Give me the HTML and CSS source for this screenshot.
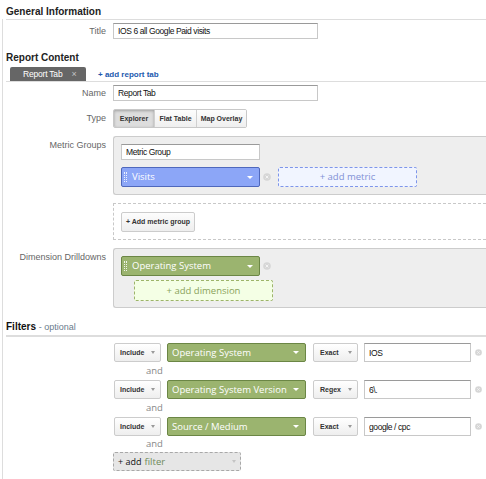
FILE: index.html
```html
<!DOCTYPE html>
<html>
<head>
<meta charset="utf-8">
<link rel="stylesheet" href="styles.css">
</head>
<body>
<div class="page">
  <div class="sec-head">General Information</div>
  <div class="frame">
    <div class="general">
      <div class="row row-top">
        <label class="lbl">Title</label>
        <input class="field w205" value="IOS 6 all Google Paid visits">
      </div>
    </div>

    <div class="sec-head2">Report Content</div>
    <div class="tabbar">
      <div class="tab"><span>Report Tab</span><span class="tab-x">×</span></div>
      <a class="add-tab">+ add report tab</a>
    </div>

    <div class="row row-top">
      <label class="lbl">Name</label>
      <input class="field w205" value="Report Tab">
    </div>

    <div class="row row-type">
      <label class="lbl">Type</label>
      <div class="seg">
        <span class="seg-btn on b1">Explorer</span>
        <span class="seg-btn b2">Flat Table</span>
        <span class="seg-btn b3">Map Overlay</span>
      </div>
    </div>

    <div class="row row-box">
      <label class="lbl lbl-top">Metric Groups</label>
      <div class="gbox">
        <input class="field w139" value="Metric Group">
        <div class="pill-line">
          <div class="pill pill-blue"><span class="grip"></span><span>Visits</span><span class="caret-w"></span></div>
          <svg class="rm" width="8" height="8" viewBox="0 0 8 8"><circle cx="4" cy="4" r="3.8" fill="#d6d6d6"/><path d="M2.6 2.6l2.8 2.8M5.4 2.6l-2.8 2.8" stroke="#f4f4f4" stroke-width="1"/></svg>
          <div class="add-metric">+ add metric</div>
        </div>
      </div>
    </div>

    <div class="row row-dash">
      <span></span>
      <div class="dbox">
        <div class="add-group">+ Add metric group</div>
      </div>
    </div>

    <div class="row row-dim">
      <label class="lbl lbl-top">Dimension Drilldowns</label>
      <div class="gbox gbox-dim">
        <div class="pill-line">
          <div class="pill pill-green"><span class="grip"></span><span>Operating System</span><span class="caret-w"></span></div>
          <svg class="rm" width="8" height="8" viewBox="0 0 8 8"><circle cx="4" cy="4" r="3.8" fill="#d6d6d6"/><path d="M2.6 2.6l2.8 2.8M5.4 2.6l-2.8 2.8" stroke="#f4f4f4" stroke-width="1"/></svg>
        </div>
        <div class="add-dim">+ add dimension</div>
      </div>
    </div>

    <div class="sec-head3">Filters <span class="opt">- optional</span></div>
    <div class="filters">
      <div class="frow">
        <div class="sbtn w-inc"><span>Include</span><span class="caret-g"></span></div>
        <div class="fsel"><span>Operating System</span><span class="caret-w"></span></div>
        <div class="sbtn w-ex"><span>Exact</span><span class="caret-g"></span></div>
        <input class="field ffield" value="IOS">
        <svg class="rm rm-f" width="7" height="7" viewBox="0 0 8 8"><circle cx="4" cy="4" r="3.8" fill="#d6d6d6"/><path d="M2.6 2.6l2.8 2.8M5.4 2.6l-2.8 2.8" stroke="#f4f4f4" stroke-width="1"/></svg>
      </div>
      <div class="and">and</div>
      <div class="frow">
        <div class="sbtn w-inc"><span>Include</span><span class="caret-g"></span></div>
        <div class="fsel"><span>Operating System Version</span><span class="caret-w"></span></div>
        <div class="sbtn w-ex"><span>Regex</span><span class="caret-g"></span></div>
        <input class="field ffield" value="6\.">
        <svg class="rm rm-f" width="7" height="7" viewBox="0 0 8 8"><circle cx="4" cy="4" r="3.8" fill="#d6d6d6"/><path d="M2.6 2.6l2.8 2.8M5.4 2.6l-2.8 2.8" stroke="#f4f4f4" stroke-width="1"/></svg>
      </div>
      <div class="and">and</div>
      <div class="frow">
        <div class="sbtn w-inc"><span>Include</span><span class="caret-g"></span></div>
        <div class="fsel"><span>Source / Medium</span><span class="caret-w"></span></div>
        <div class="sbtn w-ex"><span>Exact</span><span class="caret-g"></span></div>
        <input class="field ffield" value="google / cpc">
        <svg class="rm rm-f" width="7" height="7" viewBox="0 0 8 8"><circle cx="4" cy="4" r="3.8" fill="#d6d6d6"/><path d="M2.6 2.6l2.8 2.8M5.4 2.6l-2.8 2.8" stroke="#f4f4f4" stroke-width="1"/></svg>
      </div>
      <div class="and and-last">and</div>
      <div class="add-filter"><span class="af-plus">+ add</span> <span class="af-word">filter</span><span class="caret-l"></span></div>
    </div>
  </div>
</div>
</body>
</html>
```

FILE: styles.css
```css
* { box-sizing: border-box; }
html, body { margin: 0; padding: 0; overflow: hidden; background: #fff; }
body { font-family: "Liberation Sans", Arial, sans-serif; color: #222; }

.page { width: 486px; }

.sec-head {
  font-weight: bold; font-size: 10px; line-height: 12px;
  padding: 6px 0 1px 6px; color: #222;
}
.frame { margin-left: 2px; border-left: 1px solid #ddd; padding-left: 3px; padding-bottom: 20px; }
.general { border-top: 1px solid #ddd; }

.row {
  display: grid; grid-template-columns: 100px 1fr; column-gap: 7px;
  align-items: center;
}
.row-top { padding-top: 3px; }
.row-type { margin-top: 8px; }
.row-box { margin-top: 8px; align-items: start; }
.row-dash { margin-top: 8px; }
.row-dim { margin-top: 8px; align-items: start; }

.lbl { text-align: right; font-size: 9px; line-height: 11px; color: #666; }
.lbl-top { padding-top: 4px; }

.field {
  display: block; height: 16px; margin: 0;
  border: 1px solid #c8c8c8; border-top-color: #9a9a9a;
  background: #fff; padding: 0 4px;
  font-family: "Liberation Sans", Arial, sans-serif; font-size: 8.5px;
  letter-spacing: -0.4px; color: #111; outline: none;
}
.w205 { width: 205px; }
.w139 { width: 139px; }

.sec-head2 {
  font-weight: bold; font-size: 10px; line-height: 12px; color: #222;
  margin-top: 13px;
}
.tabbar {
  display: flex; align-items: center; margin-top: 3px;
  border-bottom: 1px solid #ddd;
}
.tab {
  height: 14px; margin-left: 4px; width: 76px;
  background: #666; color: #fff; border-radius: 2px 2px 0 0;
  display: flex; align-items: center; padding-left: 13px;
  font-size: 8.5px; letter-spacing: -0.2px;
}
.tab-x { color: #c4c4c4; font-size: 9px; margin-left: 9px; }
.add-tab {
  margin-left: 12px; color: #2259ae; font-weight: bold; font-size: 8px;
}

.seg {
  display: flex; width: 134px; height: 19px; justify-self: start;
  border: 1px solid #c8c8c8; border-radius: 2px; overflow: hidden;
}
.seg-btn {
  display: block; text-align: center;
  font-weight: bold; font-size: 7px; line-height: 17px; color: #333;
  background: linear-gradient(#fdfdfd, #efefef);
  border-left: 1px solid #d0d0d0;
}
.seg-btn.b1 { width: 40px; border-left: 0; }
.seg-btn.b2 { width: 42px; }
.seg-btn.b3 { width: 50px; }
.seg-btn.on { background: #dddddd; box-shadow: inset 0 1px 3px rgba(0,0,0,0.28); }

.gbox {
  background: #eee; border: 1px solid #ccc; border-right: 0;
  border-radius: 3px 0 0 3px;
  padding: 7px 0 7px 7px;
}
.gbox-dim { padding-bottom: 6px; }
.pill-line { display: flex; align-items: center; margin-top: 7px; }
.gbox-dim .pill-line { margin-top: 0; }

.pill {
  display: flex; align-items: center; width: 139px; height: 20px;
  border: 1px solid; border-radius: 2px; color: #fff;
  font-family: "Open Sans", "DejaVu Sans", sans-serif; font-size: 9.5px; line-height: 18px;
  padding: 0 6px 0 2px;
}
.pill-blue { background: #8ca6f7; border-color: #4f68bc; }
.pill-green { background: #9bb46f; border-color: #6b8645; }
.grip {
  width: 3px; height: 10px; margin-right: 5px;
  border-left: 1px dotted rgba(255,255,255,0.85);
  border-right: 1px dotted rgba(255,255,255,0.85);
}
.caret-w {
  margin-left: auto; width: 0; height: 0;
  border-left: 3px solid transparent; border-right: 3px solid transparent;
  border-top: 3px solid #fff;
}
.rm { display: block; margin-left: 3px; flex: none; }

.add-metric {
  width: 139px; height: 20px; margin-left: 7px;
  border: 1px dashed #7e95ea; background: #f1f5ff; border-radius: 2px;
  color: #8191d6; text-align: center;
  font-family: "Open Sans", "DejaVu Sans", sans-serif; font-size: 9.5px; line-height: 18px;
}
.add-dim {
  width: 139px; height: 21px; margin: 4px 0 0 13px;
  border: 1px dashed #9db46a; background: #f4ffe5; border-radius: 2px;
  color: #8aa35b; text-align: center;
  font-family: "Open Sans", "DejaVu Sans", sans-serif; font-size: 9.5px; line-height: 19px;
}

.dbox {
  border: 1px dashed #c8c8c8; border-right: 0; padding: 8px 0 7px 7px;
}
.add-group {
  width: 74px; height: 20px; text-align: center;
  border: 1px solid #ccc; border-radius: 2px;
  background: linear-gradient(#fdfdfd, #eeeeee);
  font-weight: bold; font-size: 7px; line-height: 18px; color: #333;
}

.sec-head3 {
  font-weight: bold; font-size: 10px; line-height: 12px; color: #111;
  margin-top: 13px; padding-bottom: 2px; border-bottom: 2px solid #ddd;
}
.opt { font-weight: normal; font-size: 9px; color: #6a7b8c; }

.filters { padding-left: 107px; padding-top: 6px; }
.frow { display: flex; align-items: center; height: 19px; }
.sbtn {
  display: flex; align-items: center; justify-content: space-between;
  height: 19px; padding: 0 5px 0 5px;
  border: 1px solid #ccc; border-radius: 2px;
  background: linear-gradient(#ffffff, #eeeeee);
  font-weight: bold; font-size: 7px; color: #333;
}
.w-inc { width: 47px; margin-left: 1px; }
.w-ex { width: 45px; margin-left: 7px; padding-left: 6px; }
.caret-g {
  width: 0; height: 0;
  border-left: 2.5px solid transparent; border-right: 2.5px solid transparent;
  border-top: 3px solid #999;
}
.fsel {
  display: flex; align-items: center; width: 139px; height: 19px; margin-left: 6px;
  background: #9bb46f; border: 1px solid #6b8645; border-radius: 2px;
  color: #fff; padding: 0 6px 0 4px;
  font-family: "Open Sans", "DejaVu Sans", sans-serif; font-size: 9.5px; line-height: 17px;
  white-space: nowrap;
}
.ffield { width: 107px; height: 19px; margin-left: 6px; }
.rm-f { margin-left: 4px; }

.and {
  height: 18px; line-height: 18px; padding-left: 33px; color: #888;
  font-family: "Open Sans", "DejaVu Sans", sans-serif; font-size: 9.5px;
}
.and-last { height: 16px; line-height: 16px; }

.add-filter {
  width: 128px; height: 19px;
  border: 1px dashed #a8a8a8; border-radius: 2px; background: #e6e6e6;
  padding-left: 4px; line-height: 17px;
  font-family: "Open Sans", "DejaVu Sans", sans-serif; font-size: 9.5px;
  display: flex; align-items: center;
}
.af-plus { color: #111; font-size: 9px; }
.af-word { color: #6d8a5a; margin-left: 3px; }
.caret-l {
  margin-left: auto; margin-right: 4px; width: 0; height: 0;
  border-left: 2.5px solid transparent; border-right: 2.5px solid transparent;
  border-top: 3px solid #c4c4c4;
}
```
